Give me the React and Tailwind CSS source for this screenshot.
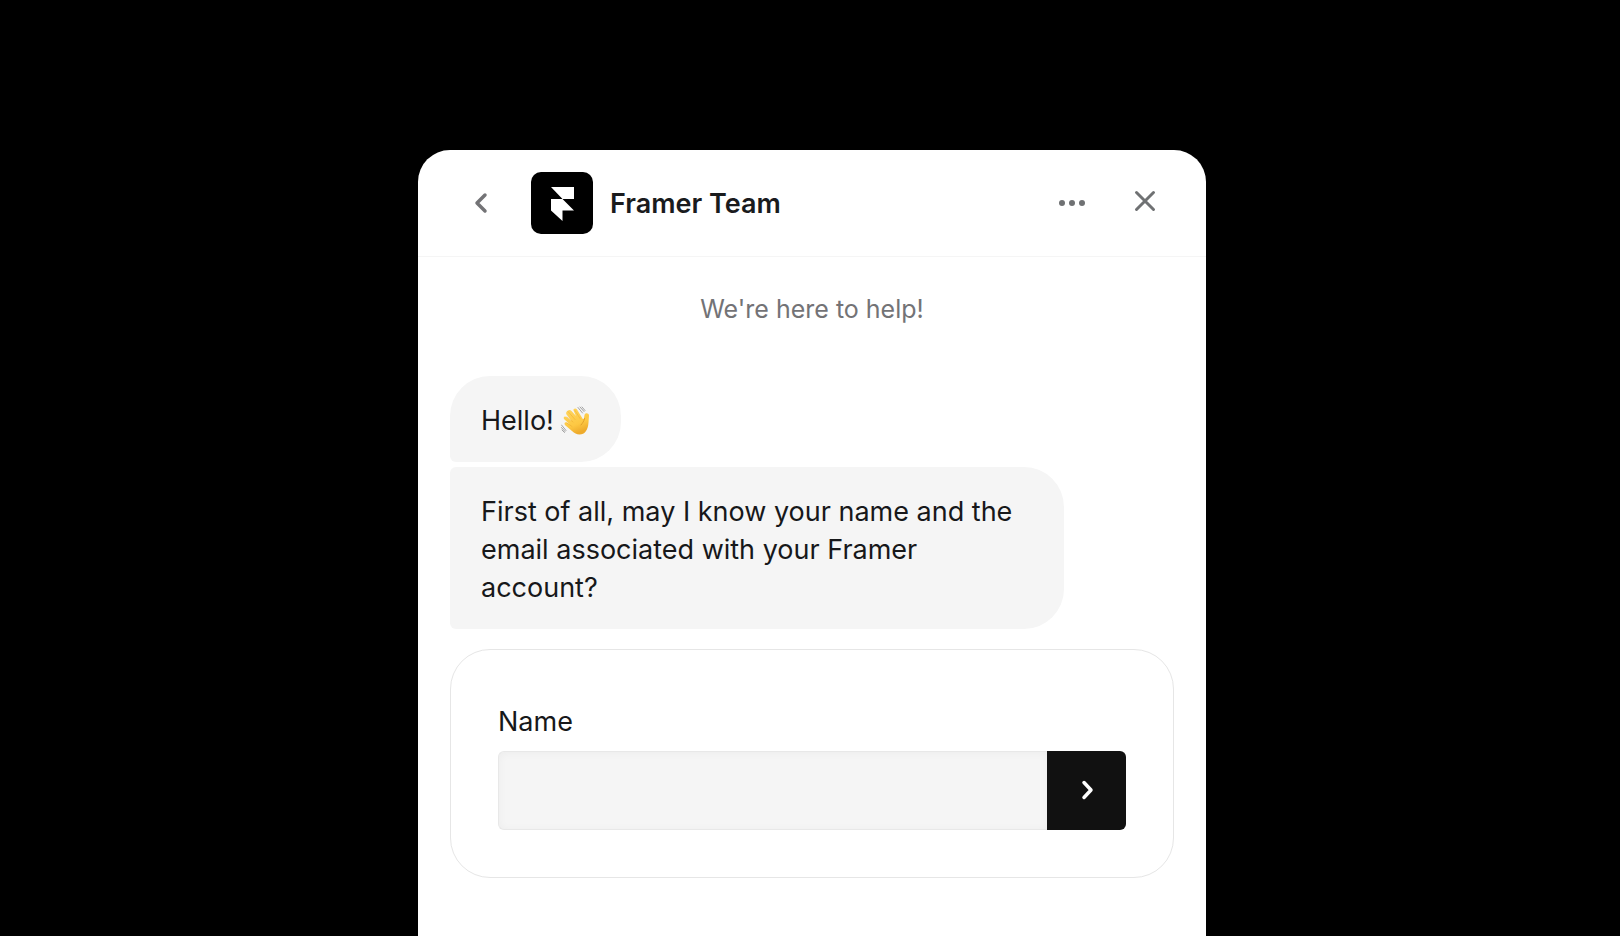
function LogoMark() {
  return (
    <svg viewBox="0 0 62 62" className="size-[62px] shrink-0 rounded-[10px] bg-black" role="img" aria-label="Framer logo">
      <path d="M20 15H43V27H31.5L20 15Z M20 27H31.5L43 38.5H31.5V49L20 38.5Z" fill="#fff" />
    </svg>
  );
}

function WavingHand() {
  return (
    <svg viewBox="0 0 60 60" className="size-[30px] shrink-0" role="img" aria-label="Waving hand">
      <defs>
        <linearGradient id="skin" x1="0" y1="0" x2="0.4" y2="1">
          <stop offset="0" stopColor="#ffd660" />
          <stop offset="0.7" stopColor="#fdc843" />
          <stop offset="1" stopColor="#eeab2c" />
        </linearGradient>
      </defs>
      <path
        d="M14 9C16.500 7 19 8 21 10L30 20L25 9C24 6 29 3 32 7L43 25C44 27 46 26 46 24L47 18C48 13 56 14 56 19L55 33C54 48 48 57 37 57C31 57 27 54 22 50L9 39C5 35 8 31 12 33L18 37L7 27C3 23 7 19 11 22L21 30L11 17C9 14 11 10 14 9Z"
        fill="url(#skin)"
      />
      <path d="M12 22L24 32M14 11L28 27M28 9L38 25M12 34L22 41" stroke="#e9a62c" strokeWidth="1.500" fill="none" strokeLinecap="round" opacity="0.600" />
      <path d="M47 25C46 31 43 34 40 38" stroke="#e0a02c" strokeWidth="2" fill="none" strokeLinecap="round" />
      <path d="M34 3L43 14M38 2L46 11M42 2L48 9M1 38L10 49M1 43L8 51M2 48L7 53" stroke="#a3a3a3" strokeWidth="2" fill="none" strokeLinecap="round" />
    </svg>
  );
}

function Header() {
  return (
    <header className="flex h-[107px] items-center border-b border-[#f5f5f5] pr-[39px] pl-10">
      <button type="button" aria-label="Back" className="flex size-11 items-center justify-center text-[#737376]">
        <svg viewBox="0 0 20 24" className="h-6 w-5" fill="none" stroke="currentColor" strokeWidth="3.500" strokeLinecap="round" strokeLinejoin="round">
          <path d="M15 4L7 12L15 20" />
        </svg>
      </button>
      <div className="ml-[29px] flex grow items-center gap-[17px]">
        <LogoMark />
        <h1 className="pt-0.5 text-[27px] leading-9 font-semibold text-[#1a1b1d]">Framer Team</h1>
      </div>
      <button type="button" aria-label="More options" className="flex size-11 items-center justify-center text-[#6f7173]">
        <svg viewBox="0 0 28 8" className="h-2 w-7" fill="currentColor">
          <circle cx="4" cy="4" r="3" />
          <circle cx="14" cy="4" r="3" />
          <circle cx="24" cy="4" r="3" />
        </svg>
      </button>
      <button type="button" aria-label="Close" className="mb-1 ml-[29px] flex size-11 items-center justify-center text-[#6f7173]">
        <svg viewBox="0 0 24 24" className="size-6" fill="none" stroke="currentColor" strokeWidth="3" strokeLinecap="round">
          <path d="M3.500 3.500L20.500 20.500M20.500 3.500L3.500 20.500" />
        </svg>
      </button>
    </header>
  );
}

export default function App() {
  return (
    <div className="flex min-h-screen justify-center bg-black pt-[150px] pl-1 font-['Inter',sans-serif] text-[#17181a]">
      <main className="w-full max-w-[788px] rounded-t-[32px] bg-white">
        <Header />
        <section className="flex flex-col items-start px-8 pb-14">
          <p className="mt-8 self-center text-[25px] leading-10 text-[#737376]">We&apos;re here to help!</p>

          <div className="mt-[47px] flex items-center gap-[7px] rounded-[40px] rounded-bl-[6px] bg-[#f5f5f5] pt-[26px] pr-[30px] pb-[22px] pl-[31px] text-[27px] leading-[38px]">
            <span>Hello!</span>
            <WavingHand />
          </div>

          <p className="mt-[5px] max-w-[614px] rounded-r-[40px] rounded-l-[6px] bg-[#f5f5f5] px-[31px] pt-[26px] pb-[22px] text-[27px] leading-[38px]">
            First of all, may I know your name and the email associated with your Framer account?
          </p>

          <form
            className="mt-5 w-full rounded-[40px] border border-[#e6e6e6] px-[47px] pt-[52px] pb-[47px]"
            onSubmit={(e) => e.preventDefault()}
          >
            <label htmlFor="name" className="block text-[27px] leading-10">
              Name
            </label>
            <div className="mt-[9px] flex h-[79px]">
              <input
                id="name"
                type="text"
                className="min-w-0 grow rounded-l-[6px] border border-r-0 border-[#e8e8e8] bg-[#f5f5f5] px-5 text-[27px] shadow-[inset_0_1px_8px_rgba(0,0,0,0.04)] outline-none"
              />
              <button type="submit" aria-label="Submit name" className="flex w-[79px] shrink-0 items-center justify-center rounded-r-[6px] bg-[#111111] text-white">
                <svg viewBox="0 0 20 24" className="h-6 w-5" fill="none" stroke="currentColor" strokeWidth="3.500" strokeLinecap="round" strokeLinejoin="round">
                  <path d="M7 3.500L14 11L7 18.500" />
                </svg>
              </button>
            </div>
          </form>
        </section>
      </main>
    </div>
  );
}
